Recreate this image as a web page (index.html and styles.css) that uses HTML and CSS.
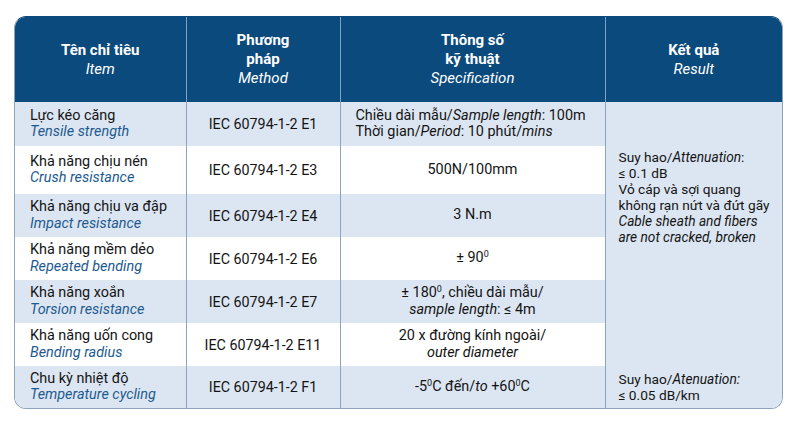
FILE: index.html
```html
<!DOCTYPE html>
<html lang="vi">
<head>
<meta charset="utf-8">
<link rel="stylesheet" href="styles.css">
</head>
<body>
<div class="wrap">
<table class="spec">
<colgroup>
<col class="c1"><col class="c2"><col class="c3"><col class="c4">
</colgroup>
<thead>
<tr class="hd">
<th>Tên chỉ tiêu<br><i>Item</i></th>
<th>Phương<br>pháp<br><i>Method</i></th>
<th>Thông số<br>kỹ thuật<br><i>Specification</i></th>
<th>Kết quả<br><i>Result</i></th>
</tr>
</thead>
<tbody>
<tr class="r1 alt">
<td class="item">Lực kéo căng<br><i>Tensile strength</i></td>
<td class="mid">IEC 60794-1-2 E1</td>
<td class="sp left">Chiều dài mẫu/<i class="k">Sample length</i>: 100m<br>Thời gian/<i class="k">Period</i>: 10 phút/<i class="k">mins</i></td>
<td class="res" rowspan="6">Suy hao/<i class="k">Attenuation</i>:<br>≤ 0.1 dB<br>Vỏ cáp và sợi quang<br>không rạn nứt và đứt gãy<br><i class="k">Cable sheath and fibers<br>are not cracked, broken</i></td>
</tr>
<tr class="r2">
<td class="item">Khả năng chịu nén<br><i>Crush resistance</i></td>
<td class="mid">IEC 60794-1-2 E3</td>
<td class="sp">500N/100mm</td>
</tr>
<tr class="r3 alt">
<td class="item">Khả năng chịu va đập<br><i>Impact resistance</i></td>
<td class="mid">IEC 60794-1-2 E4</td>
<td class="sp">3 N.m</td>
</tr>
<tr class="r4">
<td class="item">Khả năng mềm dẻo<br><i>Repeated bending</i></td>
<td class="mid">IEC 60794-1-2 E6</td>
<td class="sp">± 90<sup>0</sup></td>
</tr>
<tr class="r5 alt">
<td class="item">Khả năng xoắn<br><i>Torsion resistance</i></td>
<td class="mid">IEC 60794-1-2 E7</td>
<td class="sp">± 180<sup>0</sup>, chiều dài mẫu/<br><i class="k">sample length</i>: ≤ 4m</td>
</tr>
<tr class="r6">
<td class="item">Khả năng uốn cong<br><i>Bending radius</i></td>
<td class="mid">IEC 60794-1-2 E11</td>
<td class="sp">20 x đường kính ngoài/<br><i class="k">outer diameter</i></td>
</tr>
<tr class="r7 alt">
<td class="item">Chu kỳ nhiệt độ<br><i>Temperature cycling</i></td>
<td class="mid">IEC 60794-1-2 F1</td>
<td class="sp">-5<sup>0</sup>C đến/<i class="k">to</i> +60<sup>0</sup>C</td>
<td class="res2">Suy hao/<i class="k">Atenuation:</i><br>≤ 0.05 dB/km</td>
</tr>
</tbody>
</table>
</div>
</body>
</html>
```
FILE: styles.css
```css
html, body {
  margin: 0;
  padding: 0;
  background: #ffffff;
}
body {
  font-family: Roboto, "Liberation Sans", sans-serif;
  color: #141414;
}
.wrap {
  margin: 16px 0 0 14px;
  width: 767px;
  border: 1px solid #8ea3bc;
  border-top-color: #0b4a7c;
  border-radius: 12px;
  overflow: hidden;
}
.spec {
  width: 100%;
  border-collapse: collapse;
  table-layout: fixed;
}
.c1 { width: 171px; }
.c2 { width: 154px; }
.c3 { width: 265px; }
.c4 { width: 177px; }

.spec th {
  background: #0b4a7c;
  color: #ffffff;
  font-size: 15px;
  line-height: 19px;
  font-weight: 700;
  padding: 0 4px;
  text-align: center;
  vertical-align: middle;
  border-left: 1px solid #7ea3c7;
}
.spec th:first-child { border-left: none; }
.spec th i {
  font-weight: 400;
}
.spec td {
  font-size: 14px;
  line-height: 16px;
  padding: 0 4px;
  vertical-align: middle;
  border-left: 1px solid #8ea3bc;
  background: #ffffff;
}
.spec td:first-child { border-left: none; }
.spec tr.alt td { background: #dce6f2; }
.spec td.res { background: #ffffff; }
.spec td.item {
  padding-left: 15px;
  font-size: 14.4px;
  line-height: 16.5px;
}
.spec td.item i {
  color: #1c5a90;
}
.spec td.mid {
  text-align: center;
  font-size: 14.3px;
}
.spec td.sp {
  text-align: center;
  font-size: 14.4px;
  line-height: 16.5px;
}
.spec td.left {
  text-align: left;
  padding-left: 15px;
}
.spec td.res, .spec td.res2 {
  padding-left: 13px;
  font-size: 13.7px;
}
.spec td.res {
  vertical-align: top;
  padding-top: 47px;
}
.spec sup {
  font-size: 9px;
  line-height: 0;
  vertical-align: 5px;
}
.hd { height: 85px; }
.r1 { height: 44px; }
.r2 { height: 48px; }
.r3 { height: 43px; }
.r4 { height: 43px; }
.r5 { height: 43px; }
.r6 { height: 43px; }
.r7 { height: 42px; }
```
